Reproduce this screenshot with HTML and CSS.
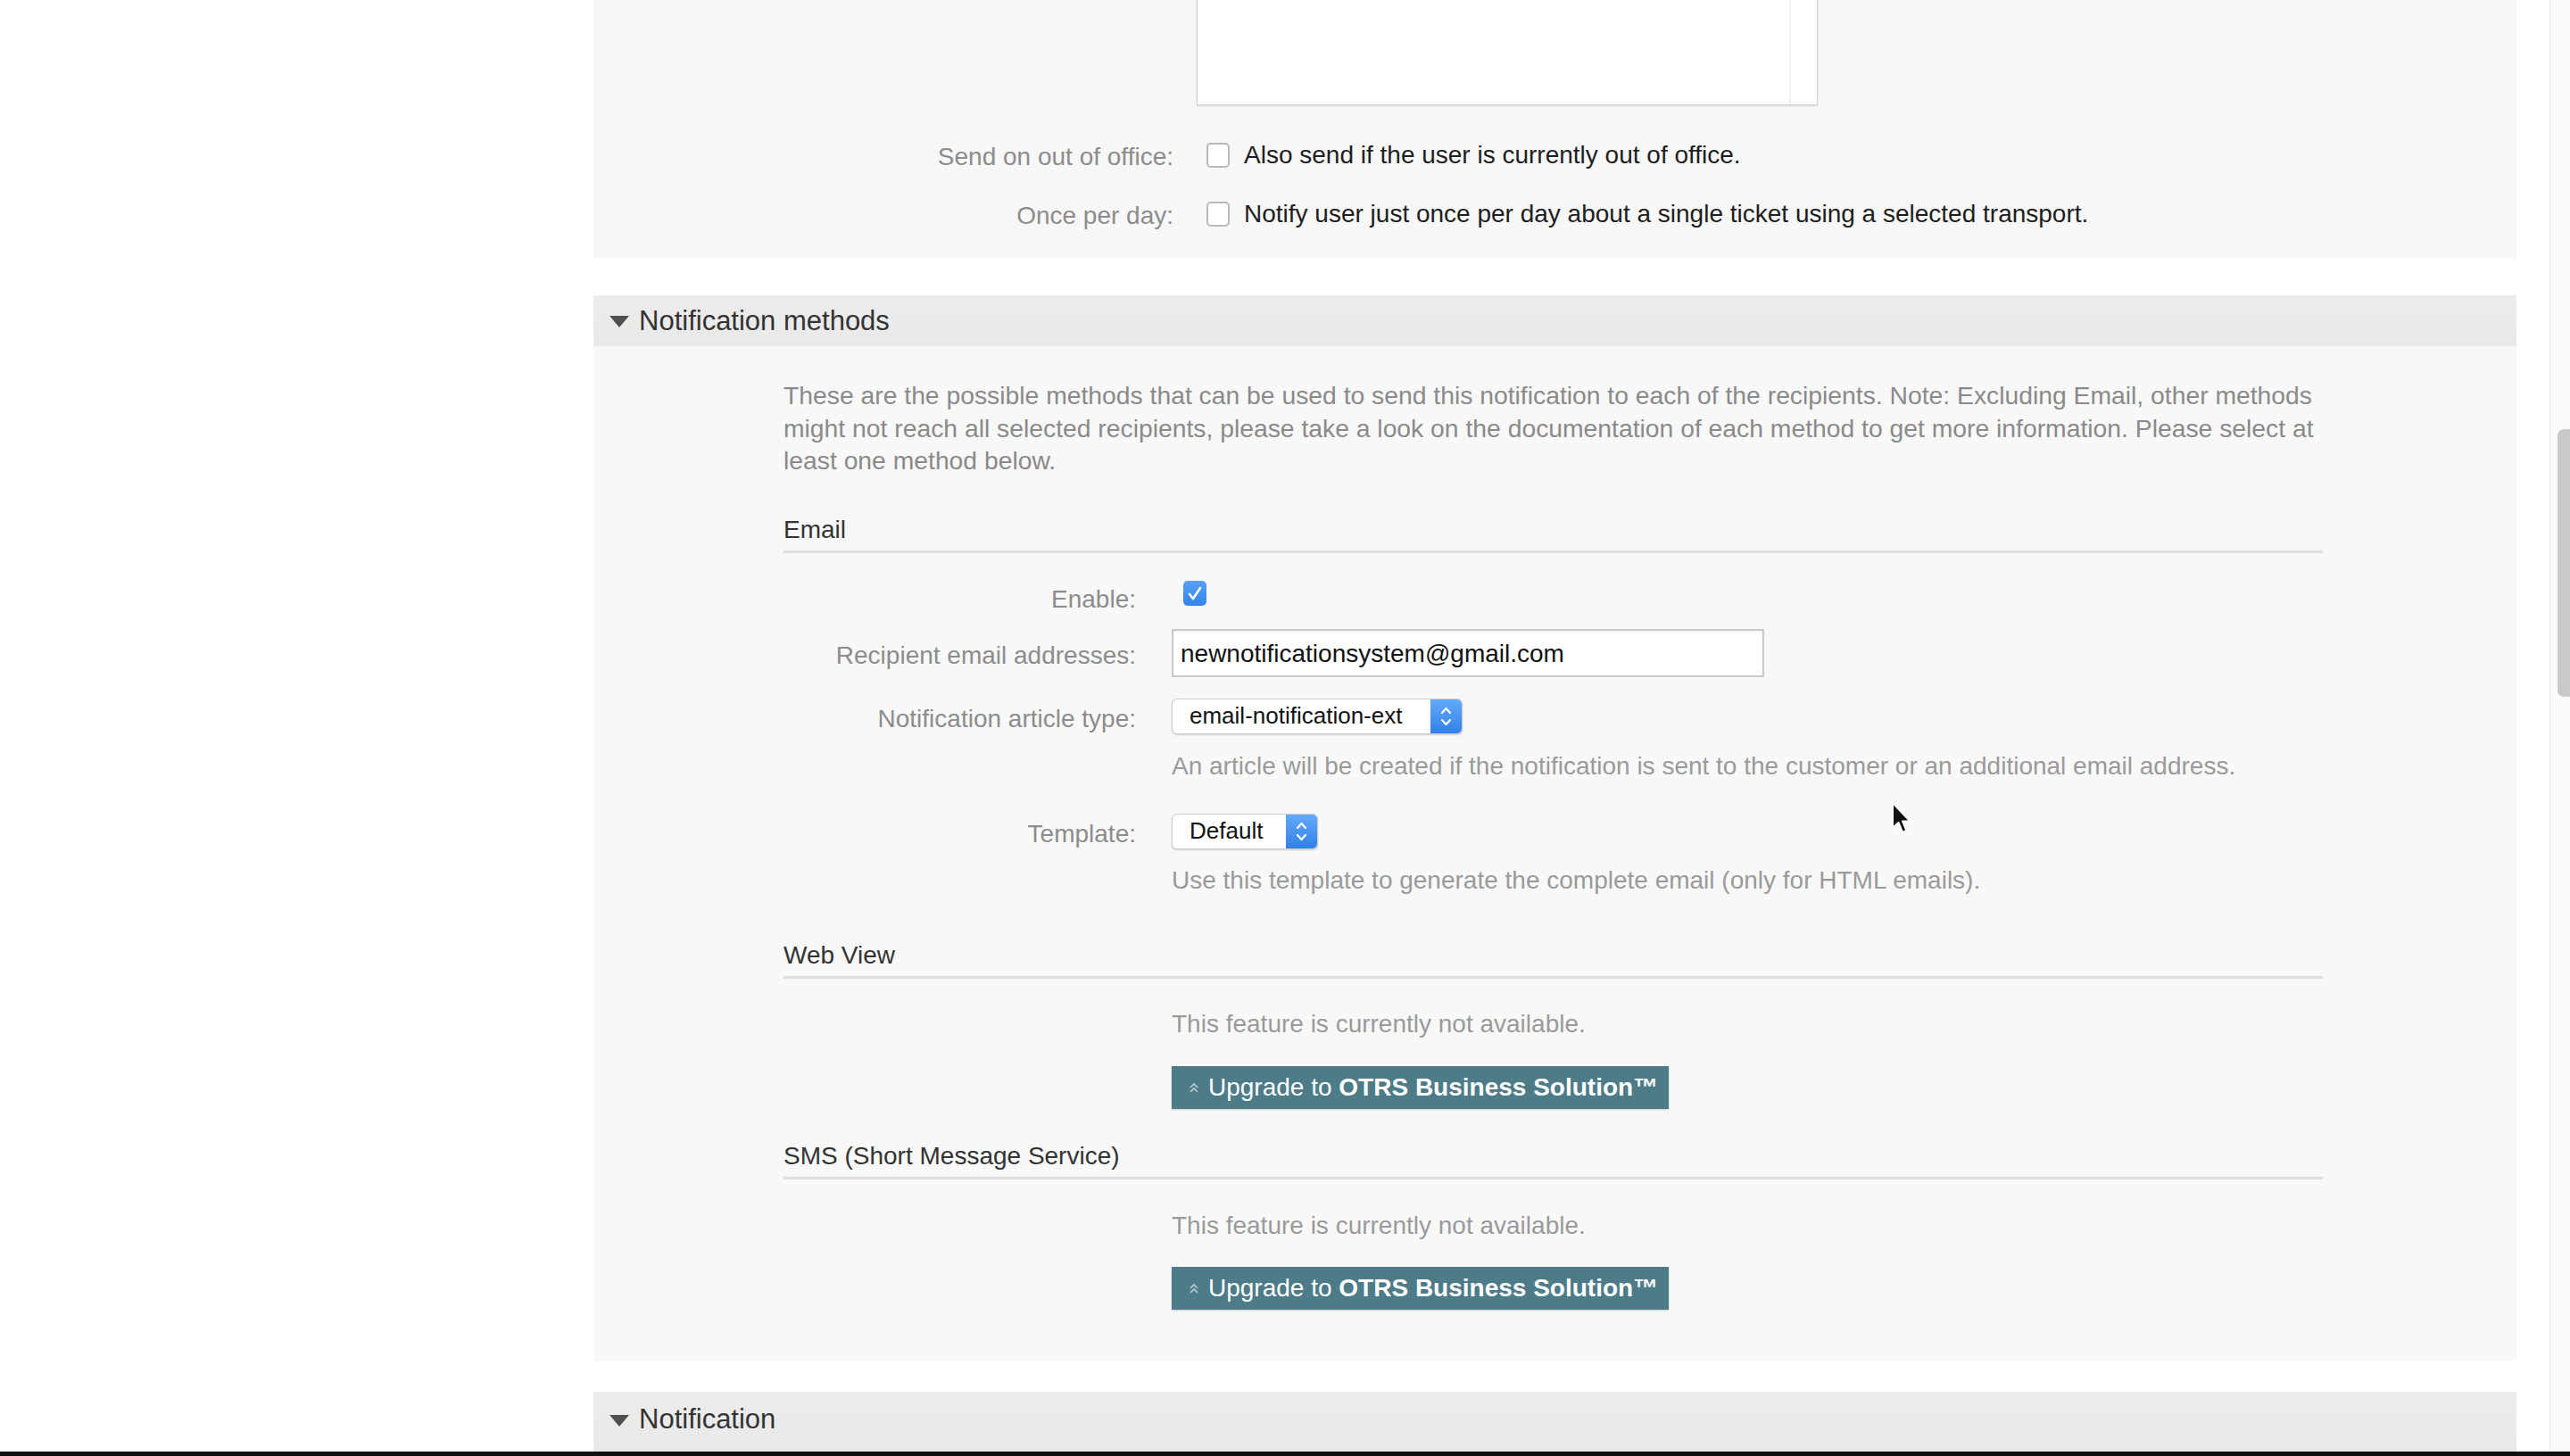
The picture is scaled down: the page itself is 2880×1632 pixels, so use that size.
FILE: index.html
```html
<!DOCTYPE html>
<html lang="en">
<head>
  <meta charset="UTF-8" />
  <meta name="viewport" content="width=device-width, initial-scale=1.0"/>
  <title>Ticket Notification - Notification methods</title>
  <link rel="stylesheet" href="styles.css">
</head>
<body>
  <div class="content">

    <div class="widget widget-top">
      <div class="top-row">
        <div class="top-label"></div>
        <div class="textarea"><div class="textarea-gutter"></div></div>
      </div>
      <div class="top-row top-check">
        <label class="top-label">Send on out of office:</label>
        <div class="field">
          <span class="checkbox"></span>
          <span class="check-text">Also send if the user is currently out of office.</span>
        </div>
      </div>
      <div class="top-row top-check">
        <label class="top-label">Once per day:</label>
        <div class="field">
          <span class="checkbox"></span>
          <span class="check-text">Notify user just once per day about a single ticket using a selected transport.</span>
        </div>
      </div>
    </div>

    <div class="widget">
      <div class="widget-header">
        <span class="toggle"></span>
        <h2>Notification methods</h2>
      </div>
      <div class="widget-body">
        <p class="intro">These are the possible methods that can be used to send this notification to each of the recipients. Note: Excluding Email, other methods might not reach all selected recipients, please take a look on the documentation of each method to get more information. Please select at least one method below.</p>

        <h3 class="subheading">Email</h3>

        <div class="field-row row-enable">
          <label>Enable:</label>
          <div class="field">
            <span class="checkbox checked">
              <svg viewBox="0 0 26 28" width="26" height="28"><path d="M7 15 L11 20 L19 8" fill="none" stroke="#fff" stroke-width="2.6" stroke-linecap="round" stroke-linejoin="round"/></svg>
            </span>
          </div>
        </div>

        <div class="field-row row-input">
          <label>Recipient email addresses:</label>
          <div class="field">
            <div class="text-input">newnotificationsystem@gmail.com</div>
          </div>
        </div>

        <div class="field-row row-select">
          <label>Notification article type:</label>
          <div class="field">
            <div class="select select-wide">
              <span class="select-value">email-notification-ext</span>
              <span class="select-arrow">
                <svg viewBox="0 0 35 40" width="35" height="40"><path d="M13 16 L17.5 11 L22 16 M13 24 L17.5 29 L22 24" fill="none" stroke="#fff" stroke-width="2.2" stroke-linecap="round" stroke-linejoin="round"/></svg>
              </span>
            </div>
          </div>
        </div>
        <p class="help help-article">An article will be created if the notification is sent to the customer or an additional email address.</p>

        <div class="field-row row-template">
          <label>Template:</label>
          <div class="field">
            <div class="select select-small">
              <span class="select-value">Default</span>
              <span class="select-arrow">
                <svg viewBox="0 0 35 40" width="35" height="40"><path d="M13 16 L17.5 11 L22 16 M13 24 L17.5 29 L22 24" fill="none" stroke="#fff" stroke-width="2.2" stroke-linecap="round" stroke-linejoin="round"/></svg>
              </span>
            </div>
          </div>
        </div>
        <p class="help help-template">Use this template to generate the complete email (only for HTML emails).</p>

        <h3 class="subheading sub-webview">Web View</h3>
        <p class="help help-feature">This feature is currently not available.</p>
        <div class="upgrade">
          <span class="upgrade-button">
            <svg class="upgrade-icon" viewBox="0 0 14 16" width="14" height="16"><path d="M3 8 L7 4 L11 8 M3 13 L7 9 L11 13" fill="none" stroke="#b8ccd2" stroke-width="1.6"/></svg>
            Upgrade to&nbsp;<b>OTRS Business Solution™</b>
          </span>
        </div>

        <h3 class="subheading sub-sms">SMS (Short Message Service)</h3>
        <p class="help help-feature">This feature is currently not available.</p>
        <div class="upgrade upgrade-sms">
          <span class="upgrade-button">
            <svg class="upgrade-icon" viewBox="0 0 14 16" width="14" height="16"><path d="M3 8 L7 4 L11 8 M3 13 L7 9 L11 13" fill="none" stroke="#b8ccd2" stroke-width="1.6"/></svg>
            Upgrade to&nbsp;<b>OTRS Business Solution™</b>
          </span>
        </div>
      </div>
    </div>

    <div class="widget widget-last">
      <div class="widget-header">
        <span class="toggle"></span>
        <h2>Notification</h2>
      </div>
      <div class="widget-body"></div>
    </div>

  </div>

  <div class="cursor">
    <svg viewBox="0 0 24 38" width="24" height="38"><path d="M2 2 L2 30 L8.5 24 L13 35 L17.5 33 L13 22.5 L21.5 22.5 Z" fill="#111" stroke="#fff" stroke-width="2" stroke-linejoin="round"/></svg>
  </div>

  <div class="scrollbar"><div class="scroll-thumb"></div></div>
  <div class="bottom-edge"></div>
</body>
</html>
```

FILE: styles.css
```css
body {
  margin: 0;
  padding: 0;
  height: 1632px;
  overflow: hidden;
  background: #fff;
  font-family: "Liberation Sans", Arial, sans-serif;
  font-size: 28px;
  color: #222;
}

.content {
  margin-left: 665px;
  margin-top: -30px;
  width: 2155px;
}

/* widgets */

.widget {
  background: #f8f8f8;
  margin-bottom: 35px;
}

.widget-top {
  background: #f7f7f7;
  padding-bottom: 40px;
  margin-bottom: 41px;
}

.widget-header {
  display: flex;
  align-items: center;
  height: 57px;
  padding-left: 18px;
  background: linear-gradient(#ececec, #e9e9e9);
}

.toggle {
  width: 0;
  height: 0;
  border-left: 11px solid transparent;
  border-right: 11px solid transparent;
  border-top: 13px solid #505050;
  margin-top: 2px;
}

.widget-header h2 {
  margin: 0 0 0 11px;
  font-size: 31px;
  font-weight: normal;
  color: #333;
}

.widget-body {
  padding: 37px 217px 57px 213px;
}

.widget-last .widget-header {
  height: 60px;
  padding-top: 3px;
  box-sizing: border-box;
}

.widget-last .widget-body {
  padding: 0;
  height: 40px;
  background: #e8e8e8;
}

/* top section */

.top-row {
  display: grid;
  grid-template-columns: 650px 1fr;
  column-gap: 26px;
  align-items: center;
}

.top-label {
  text-align: right;
  color: #8c8c8c;
  padding-top: 4px;
}

.textarea {
  width: 696px;
  height: 148px;
  box-sizing: border-box;
  background: #fff;
  border: 1px solid #cfcfcf;
  box-shadow: 0 1px 2px rgba(0, 0, 0, 0.12);
  display: flex;
  justify-content: flex-end;
}

.textarea-gutter {
  width: 29px;
  border-left: 2px solid #f0f0f0;
}

.top-check {
  margin-top: 38px;
  height: 28px;
}

.field {
  display: flex;
  align-items: center;
}

.checkbox {
  width: 26px;
  height: 28px;
  box-sizing: border-box;
  border: 2px solid #b9b9b9;
  border-radius: 5px;
  background: #fff;
  margin-left: 11px;
  flex-shrink: 0;
}

.check-text {
  margin-left: 16px;
  color: #1e1e1e;
}

/* notification methods */

.intro {
  margin: 0;
  font-size: 28.3px;
  line-height: 36.5px;
  color: #8a8a8a;
}

.subheading {
  margin: 41px 0 0;
  font-size: 28px;
  font-weight: normal;
  line-height: 36px;
  color: #333;
  padding-bottom: 5px;
  border-bottom: 3px solid #dedede;
}

.field-row {
  display: grid;
  grid-template-columns: 395px 1fr;
  column-gap: 40px;
  align-items: center;
}

.field-row label {
  text-align: right;
  color: #8c8c8c;
  padding-top: 6px;
}

.row-enable {
  margin-top: 22px;
  height: 28px;
}

.row-enable label {
  padding-top: 14px;
}

.checkbox.checked {
  margin-left: 13px;
  border: none;
  background: linear-gradient(#5aa2f7, #3283ec);
}

.checkbox.checked svg {
  display: block;
}

.row-input {
  margin-top: 35px;
}

.text-input {
  width: 664px;
  height: 54px;
  box-sizing: border-box;
  border: 2px solid #cacaca;
  background: #fff;
  box-shadow: inset 0 1px 2px rgba(0, 0, 0, 0.08);
  padding-left: 8px;
  line-height: 52px;
  color: #111;
}

.row-select {
  margin-top: 24px;
}

.row-template {
  margin-top: 35px;
}

.select {
  display: flex;
  align-items: center;
  height: 40px;
  box-sizing: border-box;
  background: #fff;
  border: 1px solid #cdcdcd;
  border-radius: 6px;
  box-shadow: 0 1px 2px rgba(0, 0, 0, 0.18);
  overflow: hidden;
  font-size: 26px;
  color: #111;
}

.select-wide {
  width: 326px;
}

.select-small {
  width: 164px;
}

.select-value {
  padding-left: 19px;
}

.select-arrow {
  margin-left: auto;
  width: 35px;
  height: 40px;
  background: linear-gradient(#66abfa, #2f7fe9);
}

.select-arrow svg {
  display: block;
}

.help {
  margin: 0 0 0 435px;
  line-height: 36px;
  color: #9a9a9a;
}

.help-article {
  margin-top: 18px;
}

.help-template {
  margin-top: 17px;
}

.sub-webview {
  margin-top: 48px;
}

.sub-sms {
  margin-top: 35px;
}

.help-feature {
  margin-top: 33px;
}

.sub-sms + .help-feature {
  margin-top: 34px;
}

.upgrade {
  margin: 29px 0 0 435px;
}

.upgrade-sms {
  margin-top: 28px;
}

.upgrade-button {
  display: inline-flex;
  align-items: center;
  width: 557px;
  height: 48px;
  box-sizing: border-box;
  padding-left: 18px;
  background: #4d7b88;
  color: #fff;
  font-size: 28px;
  box-shadow: 0 1px 2px rgba(0, 0, 0, 0.2);
}

.upgrade-icon {
  margin-right: 9px;
}

/* overlays */

.cursor {
  position: absolute;
  left: 2119px;
  top: 898px;
}

.scrollbar {
  position: fixed;
  top: 0;
  right: 0;
  width: 22px;
  height: 100%;
  background: #fafafa;
  border-left: 1px solid #ececec;
}

.scroll-thumb {
  position: absolute;
  right: 0;
  top: 481px;
  width: 14px;
  height: 300px;
  background: #c9c9c9;
  border-radius: 7px 0 0 7px;
}

.bottom-edge {
  position: fixed;
  left: 0;
  right: 0;
  bottom: 0;
  height: 5px;
  background: #111;
}
```
